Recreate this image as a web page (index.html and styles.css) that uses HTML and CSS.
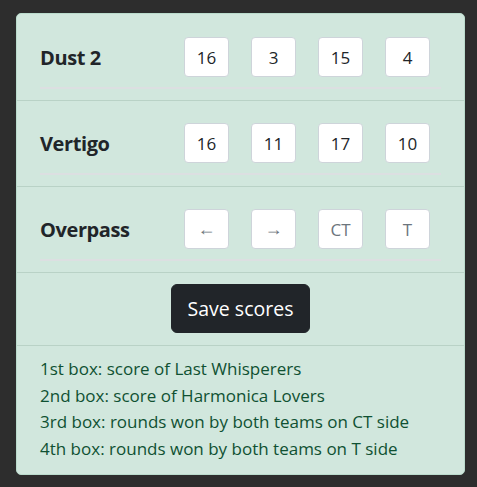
FILE: index.html
```html
<!DOCTYPE html>
<html lang="en">
<head>
<meta charset="utf-8">
<title>Scores</title>
<link rel="stylesheet" href="styles.css">
</head>
<body>
<div class="card">
  <div class="map-row">
    <div class="map-inner">
      <div class="map-name">Dust 2</div>
      <input class="score" value="16">
      <input class="score" value="3">
      <input class="score" value="15">
      <input class="score" value="4">
    </div>
  </div>
  <div class="map-row">
    <div class="map-inner">
      <div class="map-name">Vertigo</div>
      <input class="score" value="16">
      <input class="score" value="11">
      <input class="score" value="17">
      <input class="score" value="10">
    </div>
  </div>
  <div class="map-row">
    <div class="map-inner">
      <div class="map-name">Overpass</div>
      <input class="score arrow" placeholder="←">
      <input class="score arrow" placeholder="→">
      <input class="score" placeholder="CT">
      <input class="score" placeholder="T">
    </div>
  </div>
  <div class="actions">
    <button class="save-btn">Save scores</button>
  </div>
  <div class="notes">
    <div>1st box: score of Last Whisperers</div>
    <div>2nd box: score of Harmonica Lovers</div>
    <div>3rd box: rounds won by both teams on CT side</div>
    <div>4th box: rounds won by both teams on T side</div>
  </div>
</div>
</body>
</html>
```
FILE: styles.css
```css
html, body {
  margin: 0;
  background: #2d2d2d;
}
body {
  padding: 13px 12px 12px 16px;
  font-family: "Open Sans", "Noto Sans", sans-serif;
}
.card {
  background: #d1e7dd;
  border: 1px solid #badbcc;
  border-radius: 5px;
  width: 447px;
}
.map-row {
  padding: 23px 23px 11px;
  border-bottom: 1px solid #b9d2c6;
}
.map-row + .map-row {
  padding-top: 22px;
}
.map-inner {
  display: flex;
  align-items: center;
  gap: 22px;
  padding-bottom: 10px;
  border-bottom: 2px solid #dcdfe1;
}
.map-name {
  width: 122px;
  font-weight: 700;
  font-size: 20px;
  letter-spacing: -0.4px;
  color: #212529;
}
.score {
  box-sizing: border-box;
  width: 45px;
  height: 40px;
  padding: 0;
  border: 1px solid #ced4da;
  border-radius: 4px;
  background: #fff;
  text-align: center;
  font-family: inherit;
  font-size: 17px;
  color: #212529;
  outline: none;
}
.score::placeholder {
  color: #6c757d;
}
.score.arrow {
  font-family: "Liberation Sans", sans-serif;
  font-size: 18px;
}
.actions {
  display: flex;
  justify-content: center;
  padding: 11px 0 12px;
  border-bottom: 1px solid #b9d2c6;
}
.save-btn {
  background: #212529;
  color: #fff;
  border: 1px solid #212529;
  border-radius: 6px;
  font-family: inherit;
  font-size: 19.5px;
  line-height: 33px;
  padding: 7px 15.5px;
}
.notes {
  padding: 10px 23px 11px;
  color: #0f5132;
  font-size: 17px;
  line-height: 26.7px;
}
```
